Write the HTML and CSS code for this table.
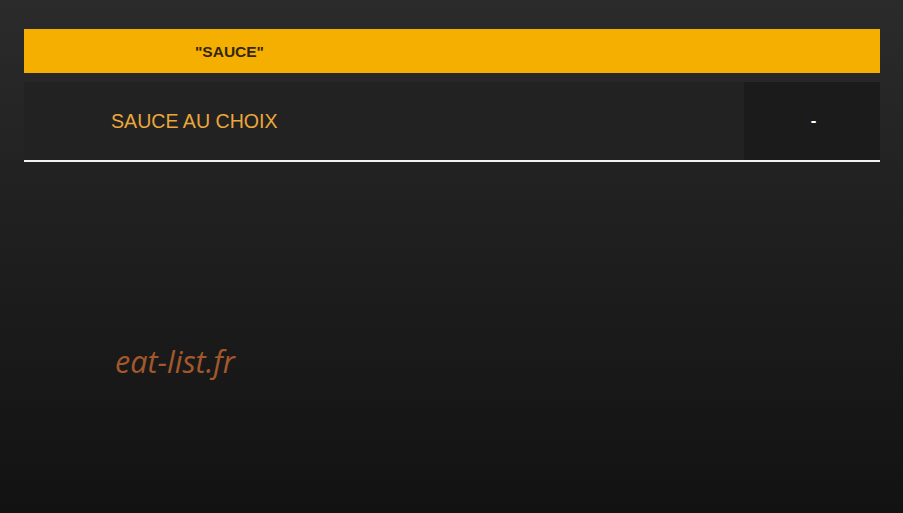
FILE: index.html
```html
<!DOCTYPE html>
<html lang="fr">
<head>
    <meta charset="UTF-8">
    <meta name="viewport" content="width=device-width, initial-scale=1.0">
    <title>Sauce - eat-list.fr</title>
    <link rel="stylesheet" href="styles.css">
</head>
<body>
    <div class="menu">
        <div class="menu-head">
            <div class="head-title">"SAUCE"</div>
        </div>
        <div class="menu-row">
            <div class="row-name">SAUCE AU CHOIX</div>
            <div class="row-price">-</div>
        </div>
    </div>

    <div class="brand">eat-list.fr</div>
</body>
</html>
```

FILE: styles.css
```css
html {
    height: 100%;
}
body {
    font-family: "Liberation Sans", Arial, sans-serif;
    margin: 0;
    padding: 29px 23px 0 24px;
    min-height: 100%;
    box-sizing: border-box;
    background: linear-gradient(to bottom, #2b2b2b 0%, #1f1f1f 45%, #121212 100%);
}
.menu {
    width: 856px;
}
.menu-head {
    display: flex;
    height: 44px;
    align-items: center;
    background-color: #f5af00;
}
.head-title {
    width: 411px;
    text-align: center;
    font-size: 15.5px;
    font-weight: bold;
    color: #33260f;
    padding-top: 1px;
}
.menu-row {
    display: flex;
    margin-top: 9px;
    height: 78px;
    background-color: #222222;
    border-bottom: 2px solid #f2f2f2;
}
.row-name {
    flex: 1;
    display: flex;
    align-items: center;
    padding-left: 87px;
    font-size: 19.6px;
    color: #eba73a;
}
.row-price {
    width: 136px;
    box-sizing: border-box;
    display: flex;
    align-items: center;
    justify-content: center;
    background-color: #1b1b1b;
    color: #ffffff;
    font-size: 17px;
    font-weight: bold;
    padding-left: 3px;
}
.brand {
    margin: 178px 0 0 91px;
    font-family: "Open Sans", sans-serif;
    font-style: italic;
    font-size: 30.5px;
    color: #a3582b;
}
```
